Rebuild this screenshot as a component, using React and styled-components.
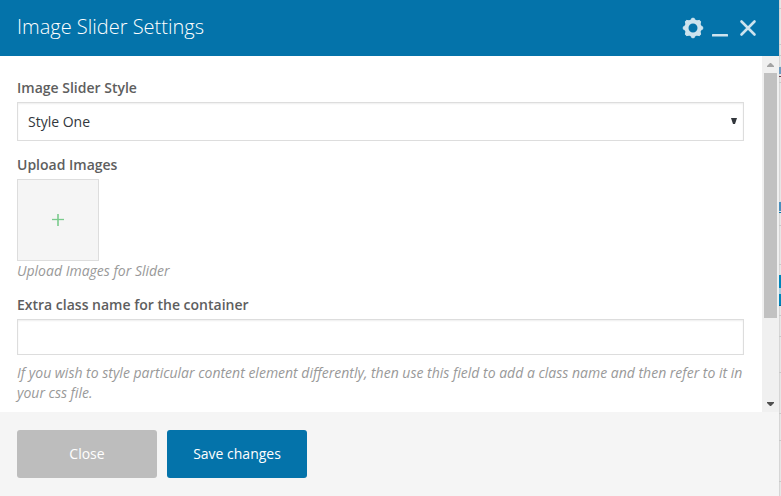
import React from "react";
import styled, { createGlobalStyle } from "styled-components";

const GlobalStyle = createGlobalStyle`
  * { box-sizing: border-box; }
  body {
    margin: 0;
    overflow: hidden;
    font-family: "Open Sans", sans-serif;
    font-size: 14px;
    color: #5e5e5e;
    background: #f1f1f1;
  }
  button, input, select { font: inherit; }
`;

const Screen = styled.div`
  display: grid;
  grid-template-columns: minmax(0, 1fr) 2px;
  height: 100vh;
`;

const Panel = styled.section`
  display: flex;
  flex-direction: column;
  min-height: 0;
  background: #fff;
`;

const Header = styled.header`
  display: flex;
  align-items: center;
  justify-content: space-between;
  flex: none;
  height: 56px;
  padding: 0 20px 0 17px;
  background: #0473aa;
`;

const Title = styled.h1`
  margin: 0;
  padding-bottom: 3px;
  font-size: 20px;
  line-height: 28px;
  font-weight: 300;
  color: #fff;
`;

const Tools = styled.div`
  display: flex;
  align-items: center;
  gap: 8px;
`;

const IconButton = styled.button`
  display: flex;
  padding: 0;
  border: 0;
  background: none;
  color: #cde3ee;
  cursor: pointer;
`;

const Body = styled.div`
  display: grid;
  grid-template-columns: minmax(0, 1fr) 17px;
  flex: 1;
  min-height: 0;
`;

const Form = styled.form`
  display: flex;
  flex-direction: column;
  gap: 14px;
  min-height: 0;
  overflow: hidden;
  padding: 22px 18px 0 17px;
`;

const Field = styled.div`
  display: flex;
  flex-direction: column;
  align-items: flex-start;
`;

const Label = styled.label`
  margin-bottom: 4px;
  line-height: 20px;
  font-weight: 600;
`;

const Hint = styled.p`
  margin: ${(p) => (p.$spaced ? "8px" : "0")} 0 0;
  line-height: 20px;
  font-style: italic;
  color: #999;
`;

const SelectBox = styled.div`
  display: grid;
  align-items: center;
  width: 100%;
  & > * { grid-area: 1 / 1; }
  & > svg { justify-self: end; margin: 0 7px 2px 0; pointer-events: none; }
`;

const Select = styled.select`
  appearance: none;
  width: 100%;
  height: 39px;
  padding: 0 10px;
  border: 1px solid #ddd;
  border-radius: 0;
  background: #fff;
  box-shadow: inset 0 1px 2px rgba(0, 0, 0, 0.07);
  color: #32373c;
`;

const TextInput = styled.input`
  width: 100%;
  height: 36px;
  padding: 0 10px;
  border: 1px solid #ddd;
  background: #fff;
  box-shadow: inset 0 1px 2px rgba(0, 0, 0, 0.07);
  color: #32373c;
`;

const AddTile = styled.button`
  display: flex;
  align-items: center;
  justify-content: center;
  width: 82px;
  height: 82px;
  padding: 0;
  border: 1px solid #ddd;
  background: #f5f5f5;
  color: #7acb8c;
  cursor: pointer;
`;

const ScrollTrack = styled.div`
  display: grid;
  grid-template-rows: 17px minmax(0, 1fr) 17px;
  justify-items: center;
  align-items: center;
  background: #f0f0f0;
`;

const ScrollThumb = styled.div`
  align-self: start;
  width: 13px;
  height: 76%;
  background: #c1c1c1;
`;

const Footer = styled.footer`
  display: flex;
  gap: 10px;
  flex: none;
  padding: 18px 17px;
  background: #f5f5f5;
`;

const Action = styled.button`
  width: 140px;
  height: 48px;
  padding: 0 0 2px;
  border: 0;
  border-radius: 3px;
  background: ${(p) => (p.$primary ? "#0473aa" : "#bdbdbd")};
  color: #fff;
  cursor: pointer;
`;

const Backdrop = styled.div`
  display: flex;
  flex-direction: column;
  overflow: hidden;
  background: linear-gradient(to right, #d6d6d6 50%, #e6e6e6 50%);
`;

const Strip = styled.div`
  flex: none;
  height: ${(p) => p.$h}px;
  background: ${(p) => p.$fill || "transparent"};
  border-bottom: 1px solid ${(p) => p.$line || "#c8c8c8"};
`;

const strips = [
  { h: 9 }, { h: 36 }, { h: 11 }, { h: 11, line: "#dddddd" },
  { h: 7, fill: "#6d9bc0", line: "#6d9bc0" }, { h: 3, line: "#6d3b4a" }, { h: 6 },
  { h: 119, line: "#dddddd" }, { h: 9, fill: "#4a8fbd", line: "#4a8fbd" },
  { h: 2, line: "#0473aa" }, { h: 13 }, { h: 39 }, { h: 10, line: "#dddddd" },
  { h: 13, fill: "#0085ba", line: "#0085ba" },
  { h: 6, fill: "#a9cfdf", line: "#a9cfdf" },
  { h: 12, fill: "#0085ba", line: "#006799" }, { h: 10 }, { h: 21 },
  { h: 36 }, { h: 41 }, { h: 27 }, { h: 41 },
];

const toothAngles = [0, 45, 90, 135, 180, 225, 270, 315];

function GearIcon() {
  return (
    <svg width="22" height="22" viewBox="0 0 22 22" stroke="currentColor" strokeLinejoin="round">
      <circle cx="11" cy="11" r="6.5" strokeWidth="4" fill="none" />
      {toothAngles.map((angle) => (
        <path
          key={angle}
          d="M8.6 3.6 9.9 1.3H12.1L13.4 3.6Z"
          fill="currentColor"
          strokeWidth="1"
          transform={`rotate(${angle} 11 11)`}
        />
      ))}
    </svg>
  );
}

export default function App() {
  return (
    <>
      <GlobalStyle />
      <Screen>
        <Panel role="dialog" aria-labelledby="panel-title">
          <Header>
            <Title id="panel-title">Image Slider Settings</Title>
            <Tools>
              <IconButton type="button" aria-label="Settings">
                <GearIcon />
              </IconButton>
              <IconButton type="button" aria-label="Minimize">
                <svg width="17" height="22" viewBox="0 0 17 22">
                  <rect x="0" y="17" width="16" height="2.5" rx="0.5" fill="currentColor" />
                </svg>
              </IconButton>
              <IconButton type="button" aria-label="Close panel">
                <svg width="22" height="22" viewBox="0 0 22 22" fill="none" stroke="currentColor" strokeWidth="2.6" strokeLinecap="round">
                  <path d="M4.5 4.5 17.5 17.5M17.5 4.5 4.5 17.5" />
                </svg>
              </IconButton>
            </Tools>
          </Header>
          <Body>
            <Form>
              <Field>
                <Label htmlFor="slider-style">Image Slider Style</Label>
                <SelectBox>
                  <Select id="slider-style" defaultValue="one">
                    <option value="one">Style One</option>
                  </Select>
                  <svg width="6" height="6" viewBox="0 0 6 6">
                    <path d="M0 0H6L4 6H2Z" fill="#32373c" />
                  </svg>
                </SelectBox>
              </Field>
              <Field>
                <Label htmlFor="slider-images">Upload Images</Label>
                <AddTile id="slider-images" type="button">
                  <svg width="12" height="12" viewBox="0 0 12 12" stroke="currentColor">
                    <path d="M0 5.5H12" strokeWidth="1.3" />
                    <path d="M6 0V12" strokeWidth="1.6" />
                  </svg>
                </AddTile>
                <Hint>Upload Images for Slider</Hint>
              </Field>
              <Field>
                <Label htmlFor="extra-class">Extra class name for the container</Label>
                <TextInput id="extra-class" type="text" />
                <Hint $spaced>
                  If you wish to style particular content element differently, then use this field to
                  add a class name and then refer to it in your css file.
                </Hint>
              </Field>
            </Form>
            <ScrollTrack aria-hidden="true">
              <svg width="7" height="4" viewBox="0 0 7 4"><path d="M0 4V3L3 0H4L7 3V4Z" fill="#a3a3a3" /></svg>
              <ScrollThumb />
              <svg width="7" height="4" viewBox="0 0 7 4"><path d="M0 0V1L3 4H4L7 1V0Z" fill="#505050" /></svg>
            </ScrollTrack>
          </Body>
          <Footer>
            <Action type="button">Close</Action>
            <Action type="button" $primary>Save changes</Action>
          </Footer>
        </Panel>
        <Backdrop aria-hidden="true">
          {strips.map((s, i) => (
            <Strip key={i} $h={s.h} $fill={s.fill} $line={s.line} />
          ))}
        </Backdrop>
      </Screen>
    </>
  );
}
